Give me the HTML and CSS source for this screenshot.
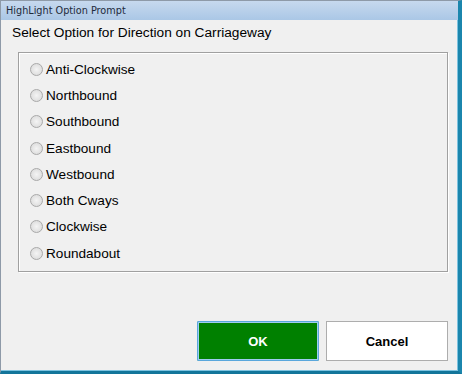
FILE: index.html
```html
<!DOCTYPE html>
<html>
<head>
<meta charset="utf-8">
<link rel="stylesheet" href="styles.css">
</head>
<body>
<div class="window">
  <div class="titlebar">HighLight Option Prompt</div>
  <div class="content">
    <div class="heading">Select Option for Direction on Carriageway</div>
    <div class="group">
      <label class="opt"><span class="radio"></span>Anti-Clockwise</label>
      <label class="opt"><span class="radio"></span>Northbound</label>
      <label class="opt"><span class="radio"></span>Southbound</label>
      <label class="opt"><span class="radio"></span>Eastbound</label>
      <label class="opt"><span class="radio"></span>Westbound</label>
      <label class="opt"><span class="radio"></span>Both Cways</label>
      <label class="opt"><span class="radio"></span>Clockwise</label>
      <label class="opt"><span class="radio"></span>Roundabout</label>
    </div>
    <div class="buttons">
      <button class="btn ok">OK</button>
      <button class="btn cancel">Cancel</button>
    </div>
  </div>
</div>
</body>
</html>
```
FILE: styles.css
```css
html, body {
  margin: 0;
  padding: 0;
  background: #f0f0f0;
}
.window {
  width: 462px;
  height: 374px;
  box-sizing: border-box;
  display: flex;
  flex-direction: column;
  background: #f0f0f0;
  border-left: 1px solid #8e9aa8;
  border-top: 1px solid #8e9aa8;
  border-right: 4px solid #1b86ad;
  border-bottom: 3px solid #13759a;
  box-shadow: inset -1px -1px 0 #7cc3e0;
  font-family: "Liberation Sans", Arial, sans-serif;
}
.titlebar {
  height: 19px;
  box-sizing: border-box;
  background: linear-gradient(#c7d9ee, #aac7e6);
  font-family: "DejaVu Sans", sans-serif;
  font-size: 9.7px;
  color: #1e2a3a;
  padding: 4px 0 0 5px;
  line-height: 12px;
}
.content {
  flex: 1;
  display: flex;
  flex-direction: column;
  padding: 0 10px 0 11px;
}
.heading {
  font-size: 13.7px;
  color: #000;
  margin-top: 5px;
  line-height: 15px;
  height: 15px;
}
.group {
  margin: 12px 0 0 6px;
  width: 430px;
  height: 220px;
  box-sizing: border-box;
  border: 1px solid #a0a0a0;
  box-shadow: inset 1px 1px 0 #fff, 1px 1px 0 #fff;
  padding: 3px 0 0 11px;
  display: grid;
  grid-template-rows: repeat(8, 26.3px);
}
.opt {
  display: flex;
  align-items: center;
  font-size: 13.6px;
  color: #000;
  gap: 3px;
}
.radio {
  width: 11px;
  height: 11px;
  border-radius: 50%;
  border: 1px solid #a9a9a9;
  background: radial-gradient(circle at 50% 50%, #f4f4f4 0, #e2e2e2 60%, #d6d6d6 100%);
}
.buttons {
  display: flex;
  justify-content: flex-end;
  gap: 7px;
  margin-top: 49px;
}
.btn {
  width: 122px;
  height: 40px;
  box-sizing: border-box;
  font-family: "Liberation Sans", Arial, sans-serif;
  font-size: 13px;
  font-weight: bold;
  padding: 0;
}
.ok {
  background: #008000;
  color: #fff;
  border: 1px solid #5aa7dc;
  box-shadow: inset 0 0 0 1px #9fcdef;
  border-radius: 1px;
}
.cancel {
  background: #fff;
  color: #000;
  border: 1px solid #adadad;
}
```
